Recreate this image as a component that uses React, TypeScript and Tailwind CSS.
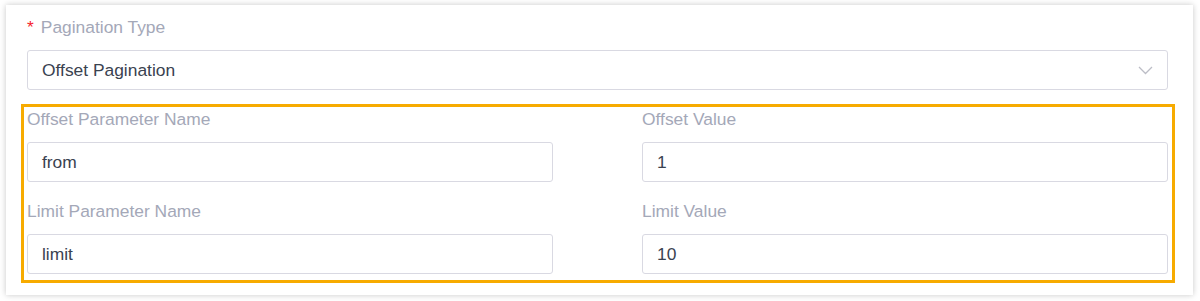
const font = { fontFamily: '"Liberation Sans", Arial, sans-serif' };

function Field({ label, value }: { label: string; value: string }) {
  return (
    <div className="flex flex-col">
      <div className="h-6 leading-6 text-[17.4px] text-[#a4a8b8] mb-[11px]">{label}</div>
      <div className="h-10 flex items-center px-[14px] border border-[#d9d9e2] rounded-[3px] bg-white text-[17.4px] leading-6 text-[#3a4250]">
        {value}
      </div>
    </div>
  );
}

export default function App() {
  return (
    <div className="w-[1200px] h-[301px] bg-white pt-[5px] pl-[6px] pr-[7px] pb-[6px]" style={font}>
      <div className="h-full bg-white shadow-[0_0_6px_rgba(0,0,0,0.22)] pt-[10px] pl-[21px] pr-[25px]">
        <div className="h-6 leading-6 text-[17.4px] flex items-center mb-[11px]">
          <span className="text-[#f5222d] mr-[7px]">*</span>
          <span className="text-[#a4a8b8]">Pagination Type</span>
        </div>
        <div className="h-10 flex items-center justify-between pl-[14px] pr-[14px] border border-[#d9d9e2] rounded-[3px] text-[17.4px] leading-6 text-[#3a4250]">
          <span>Offset Pagination</span>
          <svg width="15" height="9" viewBox="0 0 15 9" fill="none">
            <polyline points="1,1 7.5,7.5 14,1" stroke="#bcbdc6" strokeWidth="1.3" />
          </svg>
        </div>
        <div className="mt-[14px] -ml-[6px] -mr-[7px] border-[3px] border-[#f7ab00] pl-[3px] pr-[4px] pb-[6px]">
          <div className="grid grid-cols-2 gap-x-[89px] gap-y-[17px]">
            <Field label="Offset Parameter Name" value="from" />
            <Field label="Offset Value" value="1" />
            <Field label="Limit Parameter Name" value="limit" />
            <Field label="Limit Value" value="10" />
          </div>
        </div>
      </div>
    </div>
  );
}
